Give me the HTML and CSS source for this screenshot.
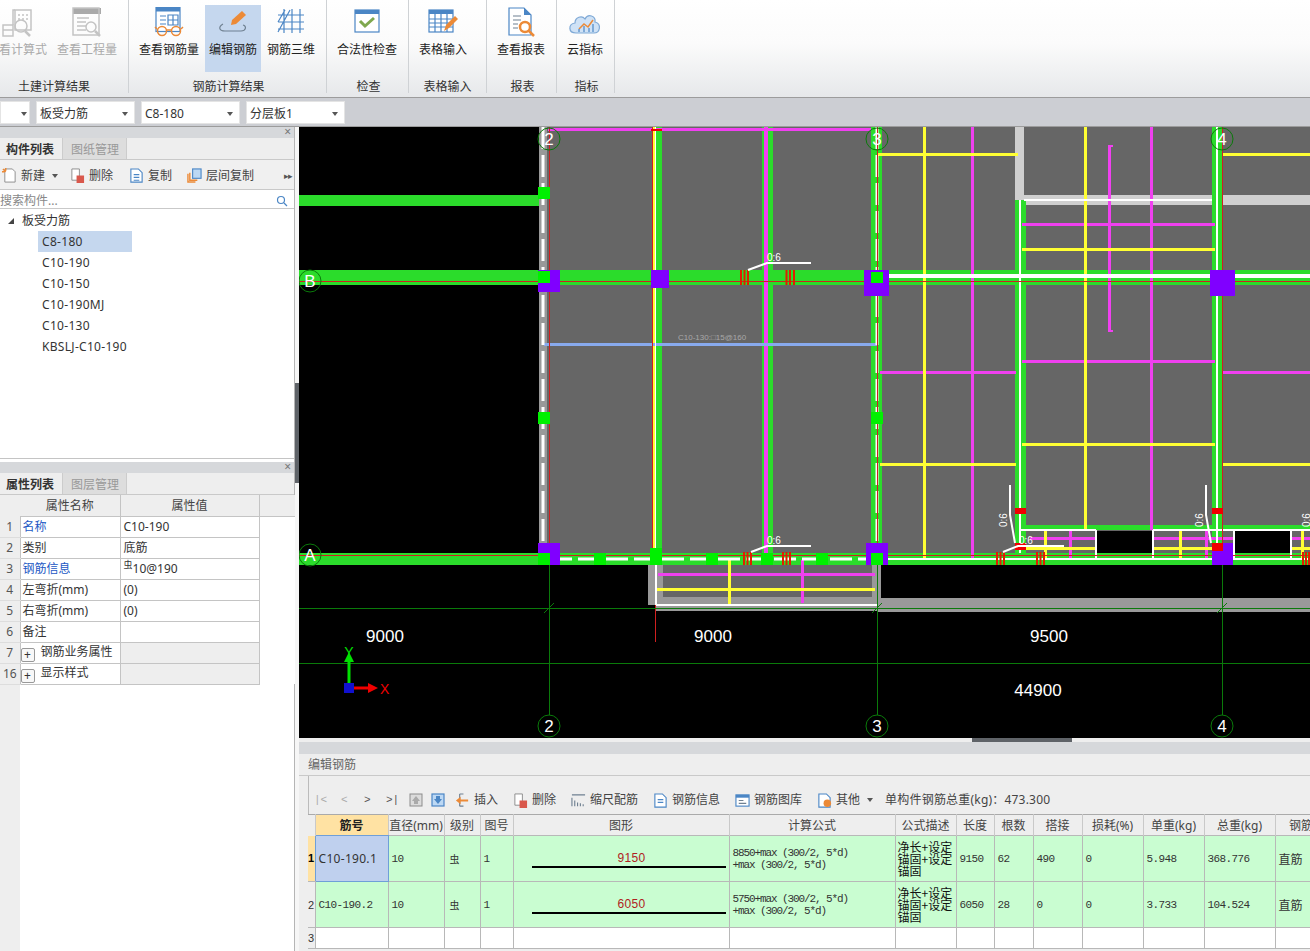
FILE: index.html
```html
<!DOCTYPE html>
<html lang="zh-CN">
<head>
<meta charset="utf-8">
<title>编辑钢筋</title>
<link rel="stylesheet" href="styles.css">
</head>
<body>
<div class="app">
  <header class="ribbon">
    <section class="group g1">
      <div class="btns">
        <div class="btn off"><svg class="ico" viewBox="0 0 32 30"><g class="s-grey"><rect x="14" y="3" width="16" height="20"/><rect x="2" y="18" width="10" height="11"/><path d="M12 18V3h2M12 23h-10"/><circle cx="20" cy="19" r="6"/><path d="M24 24l5 5" class="thick"/><path d="M17 8h2M21 8h2M25 8h2M17 12h2M21 12h2M25 12h2" /></g></svg><span>查看计算式</span></div>
        <div class="btn off"><svg class="ico" viewBox="0 0 32 30"><rect x="2" y="1" width="28" height="6" class="f-grey"/><g class="s-grey"><rect x="2" y="1" width="26" height="27"/><path d="M6 11h12M6 15h9M6 19h9M6 23h9"/><circle cx="20" cy="20" r="5"/><path d="M24 24l5 5" class="thick"/></g></svg><span>查看工程量</span></div>
      </div>
      <div class="label">土建计算结果</div>
    </section>
    <section class="group g2">
      <div class="btns">
        <div class="btn"><svg class="ico" viewBox="0 0 32 30"><rect x="3" y="0.5" width="24" height="24" class="f-white s-blue"/><rect x="3" y="0.5" width="24" height="4" class="f-blue"/><path d="M7 9h6M7 13h6M7 17h6M20 8v10M15 13h10M15 8h10v10H15z" class="s-blue"/><g class="s-orange thick"><circle cx="9" cy="24" r="4.5"/><circle cx="23" cy="24" r="4.5"/><path d="M13.500 23h5M4 22L2 20M28 22l2-2"/></g></svg><span>查看钢筋量</span></div>
        <div class="btn active"><svg class="ico" viewBox="0 0 32 30"><path d="M6 17c-5 3-4 7 2 7h16c5 0 6-5 2-6" class="s-slate"/><path d="M14 18l1-5 10-9 4 4-10 9z" class="f-orange"/></svg><span>编辑钢筋</span></div>
        <div class="btn"><svg class="ico" viewBox="0 0 32 30"><path d="M9 2v24M17 2v24M25 2v24M3 8h26M3 15h26M3 22h26M3 25L15 3M3 15l7-12" class="s-blue"/></svg><span>钢筋三维</span></div>
      </div>
      <div class="label">钢筋计算结果</div>
    </section>
    <section class="group g3">
      <div class="btns">
        <div class="btn"><svg class="ico" viewBox="0 0 32 30"><rect x="4" y="3" width="24" height="22" class="f-white s-blue"/><rect x="4" y="3" width="24" height="4" class="f-blue"/><path d="M9 14l5 5 9-8" class="s-check"/></svg><span>合法性检查</span></div>
      </div>
      <div class="label">检查</div>
    </section>
    <section class="group g4">
      <div class="btns">
        <div class="btn"><svg class="ico" viewBox="0 0 32 30"><rect x="2" y="3" width="24" height="22" class="f-white s-blue"/><rect x="2" y="3" width="24" height="4" class="f-blue"/><path d="M2 12h24M2 16h24M2 20h24M8 7v18M14 7v18M20 7v18" class="s-blue"/><path d="M17 24l2-6 9-9 3 3-9 9z" class="f-orange"/></svg><span>表格输入</span></div>
      </div>
      <div class="label">表格输入</div>
    </section>
    <section class="group g5">
      <div class="btns">
        <div class="btn"><svg class="ico" viewBox="0 0 32 30"><path d="M4 1h15l7 7v20H4z" class="f-white s-blue"/><path d="M19 1l7 7h-7z" class="f-blue"/><path d="M8 9h8M8 13h8M8 17h5M8 21h5" class="s-slate"/><circle cx="20" cy="20" r="5" class="s-orange thick"/><path d="M24 24l5 5" class="s-orange thick"/></svg><span>查看报表</span></div>
      </div>
      <div class="label">报表</div>
    </section>
    <section class="group g6">
      <div class="btns">
        <div class="btn"><svg class="ico" viewBox="0 0 32 30"><path d="M7 26c-8 0-8-9-1-10 0-6 7-8 10-4 3-6 11-3 10 3 7 2 5 11-1 11z" class="f-cloud s-cloud"/><path d="M10 22l5-5 4 3 5-7" class="s-orange"/><path d="M10 25v-3M15 25v-6M20 25v-4M24 25v-8" class="s-blue"/></svg><span>云指标</span></div>
      </div>
      <div class="label">指标</div>
    </section>
  </header>

  <div class="combobar">
    <div class="combo first"></div>
    <div class="combo">板受力筋</div>
    <div class="combo">C8-180</div>
    <div class="combo">分层板1</div>
  </div>

  <div class="main">
    <aside class="left">
      <section class="panel top">
        <div class="panel-head">×</div>
        <div class="tabs"><span class="tab on">构件列表</span><span class="tab">图纸管理</span></div>
        <div class="tools">
          <svg class="mini" viewBox="0 0 16 16"><path d="M3 1h8l3 3v11H3z" class="f-white s-grey2"/><path d="M1 1l3 3M4 0v3M0 4h3" class="s-orange"/></svg>
          <span class="tool">新建</span><i class="caret"></i>
          <svg class="mini m-del" viewBox="0 0 16 16"><path d="M2 1h8v12H2z" class="f-white s-grey2"/><rect x="7" y="8" width="8" height="8" class="f-red"/></svg>
          <span class="tool">删除</span>
          <svg class="mini m-copy" viewBox="0 0 16 16"><path d="M2 1h8l4 4v10H2z" class="f-white s-blue"/><path d="M5 7h6M5 10h6M5 13h6" class="s-blue"/></svg>
          <span class="tool">复制</span>
          <svg class="mini m-layer" viewBox="0 0 16 16"><path d="M1 6v9h8" class="s-orange"/><path d="M3 5v8h8" class="s-orange"/><rect x="6" y="1" width="9" height="10" class="f-sky s-blue"/></svg>
          <span class="tool">层间复制</span>
          <span class="more">▸▸</span>
        </div>
        <div class="search"><span>搜索构件...</span><svg class="glass" viewBox="0 0 12 12"><circle cx="5" cy="5" r="3.500" class="s-blue"/><path d="M8 8l3 3" class="s-blue"/></svg></div>
        <div class="tree">
          <div class="root"><i class="tri"></i>板受力筋</div>
          <div class="leaf sel">C8-180</div>
          <div class="leaf">C10-190</div>
          <div class="leaf">C10-150</div>
          <div class="leaf">C10-190MJ</div>
          <div class="leaf">C10-130</div>
          <div class="leaf">KBSLJ-C10-190</div>
        </div>
      </section>
      <section class="panel bottom">
        <div class="panel-head">×</div>
        <div class="tabs"><span class="tab on">属性列表</span><span class="tab">图层管理</span></div>
        <table class="props">
          <colgroup><col class="pc0"><col class="pc1"><col class="pc2"><col class="pc3"></colgroup>
          <thead><tr><th class="idx"></th><th>属性名称</th><th>属性值</th><th class="pad"></th></tr></thead>
          <tbody>
            <tr><td class="idx">1</td><td class="link">名称</td><td>C10-190</td><td class="blank"></td></tr>
            <tr><td class="idx">2</td><td>类别</td><td>底筋</td><td class="blank"></td></tr>
            <tr><td class="idx">3</td><td class="link">钢筋信息</td><td><sup class="grade">虫</sup>10@190</td><td class="blank"></td></tr>
            <tr><td class="idx">4</td><td>左弯折(mm)</td><td>(0)</td><td class="blank"></td></tr>
            <tr><td class="idx">5</td><td>右弯折(mm)</td><td>(0)</td><td class="blank"></td></tr>
            <tr><td class="idx">6</td><td>备注</td><td></td><td class="blank"></td></tr>
            <tr><td class="idx">7</td><td><span class="plus">+</span>钢筋业务属性</td><td class="shade"></td><td class="blank"></td></tr>
            <tr><td class="idx">16</td><td><span class="plus">+</span>显示样式</td><td class="shade"></td><td class="blank"></td></tr>
          </tbody>
        </table>
        <div class="strip"></div>
      </section>
    </aside>

    <div class="gutter"><div class="grip"></div></div>

    <div class="right">
      <svg class="cad" width="1011" height="611" viewBox="299 127 1011 611">
        <rect x="299" y="127" width="1011" height="611" class="f-black"/>
        <rect x="547" y="127" width="763" height="428" class="f-slab"/>
        <rect x="539" y="127" width="8" height="428" class="f-wall"/>
        <!-- balcony and lower band -->
        <rect x="648" y="565" width="233" height="40" class="f-wall"/>
        <rect x="663" y="565" width="209" height="32" class="f-slab"/>
        <rect x="655" y="604" width="655" height="7" class="f-wall"/>
        <rect x="878" y="598" width="432" height="14" class="f-wall"/>
        <!-- notches -->
        <g class="f-black">
          <rect x="1096" y="531" width="57" height="22"/>
          <rect x="1235" y="531" width="56" height="22"/>
        </g>
        <!-- pale walls -->
        <g class="f-pale">
          <rect x="1015" y="127" width="9" height="73"/>
          <rect x="1015" y="195" width="197" height="10"/>
          <rect x="1223" y="195" width="87" height="10"/>
        </g>
        <!-- green beams -->
        <g class="f-green">
          <rect x="299" y="195" width="240" height="11"/>
          <rect x="299" y="270" width="1011" height="15"/>
          <rect x="299" y="553" width="1011" height="12"/>
          <rect x="652" y="127" width="10" height="426"/>
          <rect x="762" y="127" width="11" height="426"/>
          <rect x="871" y="127" width="11" height="426"/>
          <rect x="1015" y="200" width="11" height="353"/>
          <rect x="1212" y="127" width="11" height="426"/>
          <rect x="1026" y="525" width="284" height="5"/>
        </g>
        <!-- magenta bars -->
        <g class="f-mag">
          <rect x="548" y="128" width="323" height="3"/>
          <rect x="764" y="127" width="4" height="426"/>
          <rect x="971" y="127" width="3" height="431"/>
          <rect x="1150" y="127" width="3" height="403"/>
          <rect x="1108" y="145" width="3" height="186"/>
          <rect x="1108" y="145" width="5" height="2"/>
          <rect x="1108" y="330" width="5" height="2"/>
          <rect x="1022" y="223" width="193" height="3"/>
          <rect x="1022" y="360" width="193" height="3"/>
          <rect x="880" y="371" width="136" height="3"/>
          <rect x="1223" y="371" width="87" height="3"/>
          <rect x="658" y="573" width="217" height="3"/>
          <rect x="801" y="560" width="3" height="43"/>
          <rect x="1030" y="537" width="66" height="3"/>
          <rect x="1069" y="531" width="3" height="27"/>
          <rect x="1153" y="537" width="81" height="3"/>
          <rect x="1205" y="531" width="3" height="27"/>
          <rect x="1291" y="537" width="19" height="3"/>
        </g>
        <!-- yellow bars -->
        <g class="f-yel">
          <rect x="878" y="153" width="140" height="3"/>
          <rect x="1222" y="153" width="88" height="3"/>
          <rect x="923" y="127" width="3" height="431"/>
          <rect x="1084" y="127" width="3" height="403"/>
          <rect x="1022" y="248" width="193" height="3"/>
          <rect x="1022" y="443" width="193" height="3"/>
          <rect x="880" y="463" width="136" height="3"/>
          <rect x="1223" y="463" width="87" height="3"/>
          <rect x="653" y="127" width="2" height="426"/>
          <rect x="657" y="588" width="218" height="3"/>
          <rect x="728" y="560" width="3" height="45"/>
          <rect x="1026" y="547" width="70" height="3"/>
          <rect x="1044" y="530" width="3" height="28"/>
          <rect x="1153" y="547" width="81" height="3"/>
          <rect x="1179" y="530" width="3" height="28"/>
          <rect x="1291" y="547" width="19" height="3"/>
          <rect x="1301" y="530" width="3" height="28"/>
        </g>
        <rect x="544" y="343" width="333" height="3" class="f-steel"/>
        <text x="678" y="340" class="t-tiny">C10-130:□15@160</text>
        <!-- white lines -->
        <g class="f-white">
          <rect x="655" y="127" width="1" height="426"/>
          <rect x="885" y="274" width="425" height="4"/>
          <rect x="1019" y="200" width="2" height="353"/>
          <rect x="1216" y="127" width="2" height="426"/>
          <rect x="1024" y="199" width="188" height="2"/>
          <rect x="655" y="604" width="222" height="2"/>
          <rect x="655" y="565" width="2" height="40"/>
          <rect x="880" y="558" width="430" height="2"/>
          <rect x="1021" y="529" width="75" height="2"/>
          <rect x="1153" y="529" width="157" height="2"/>
          <rect x="1095" y="530" width="2" height="29"/>
          <rect x="1152" y="530" width="2" height="29"/>
          <rect x="1233" y="530" width="2" height="29"/>
          <rect x="1290" y="530" width="2" height="29"/>
        </g>
        <path d="M543 127V553" class="s-dash"/>
        <path d="M877 127V553" class="s-dash"/>
        <path d="M550 559H871" class="s-dash"/>
        <!-- red lines -->
        <g class="s-red">
          <path d="M549.500 127V553M652.500 127V553M877.500 127V553M1222.500 127V565M299 281.500H1310M299 555.500H1310M655.500 605V642"/>
        </g>
        <rect x="651" y="129" width="11" height="2" class="f-red"/>
        <!-- purple columns -->
        <g class="f-purple">
          <rect x="538" y="270" width="22" height="22"/>
          <rect x="651" y="270" width="18" height="18"/>
          <rect x="864" y="270" width="25" height="26"/>
          <rect x="1210" y="270" width="25" height="26"/>
          <rect x="538" y="543" width="22" height="22"/>
          <rect x="866" y="543" width="22" height="22"/>
          <rect x="1212" y="543" width="21" height="22"/>
        </g>
        <!-- bright nodes -->
        <g class="f-node">
          <rect x="538" y="187" width="12" height="12"/>
          <rect x="538" y="271" width="12" height="12"/>
          <rect x="871" y="272" width="12" height="11"/>
          <rect x="538" y="412" width="12" height="12"/>
          <rect x="871" y="412" width="12" height="12"/>
          <rect x="538" y="553" width="12" height="12"/>
          <rect x="594" y="553" width="12" height="12"/>
          <rect x="650" y="548" width="12" height="17"/>
          <rect x="706" y="553" width="12" height="12"/>
          <rect x="761" y="553" width="12" height="12"/>
          <rect x="816" y="553" width="12" height="12"/>
          <rect x="871" y="553" width="12" height="12"/>
        </g>
        <!-- red ticks -->
        <g class="s-tick">
          <path d="M741 270V285M744.500 270V285M748 270V285M786.500 270V285M790 270V285M794 270V285"/>
          <path d="M744 552V565M747.500 552V565M751 552V565M783 552V565M786.500 552V565M790 552V565"/>
          <path d="M997 552V565M1000.500 552V565M1004 552V565M1037 552V565M1040.500 552V565M1044 552V565"/>
          <path d="M1303 552V565M1306 552V565M1309 552V565"/>
        </g>
        <g class="f-red">
          <rect x="1015" y="508" width="11" height="6"/>
          <rect x="1212" y="508" width="11" height="6"/>
          <rect x="1015" y="543" width="11" height="7"/>
          <rect x="1212" y="543" width="11" height="8"/>
        </g>
        <!-- leaders -->
        <g class="s-white">
          <path d="M748 270l19-7h44"/>
          <path d="M751 552l16-6h44"/>
          <path d="M1003 552l15-6h46"/>
          <path d="M1010 485v30l5 28"/>
          <path d="M1206 485v30l5 28"/>
        </g>
        <g class="t-small">
          <text x="767" y="261">0:6</text>
          <text x="767" y="544">0:6</text>
          <text x="1019" y="544">0:6</text>
          <text transform="translate(1007 527) rotate(-90)">0:6</text>
          <text transform="translate(1203 527) rotate(-90)">0:6</text>
          <text transform="translate(1310 527) rotate(-90)">0:6</text>
        </g>
        <!-- axes -->
        <g class="s-axis">
          <path d="M549.500 565V715M877.500 565V715M1222.500 565V715M299 608.500H1310M299 663.500H1310"/>
          <path d="M544 613l10-10M872 613l10-10M1217 613l10-10"/>
          <circle cx="549" cy="139" r="11"/>
          <circle cx="877" cy="139" r="11"/>
          <circle cx="1222" cy="139" r="11"/>
          <circle cx="549" cy="726" r="11"/>
          <circle cx="877" cy="726" r="11"/>
          <circle cx="1222" cy="726" r="11"/>
          <circle cx="310" cy="281" r="11"/>
          <circle cx="310" cy="555" r="11"/>
        </g>
        <g class="t-axis">
          <text x="549" y="145">2</text>
          <text x="877" y="145">3</text>
          <text x="1222" y="145">4</text>
          <text x="549" y="732">2</text>
          <text x="877" y="732">3</text>
          <text x="1222" y="732">4</text>
          <text x="310" y="287">B</text>
          <text x="310" y="561">A</text>
        </g>
        <g class="t-dim">
          <text x="385" y="642">9000</text>
          <text x="713" y="642">9000</text>
          <text x="1049" y="642">9500</text>
          <text x="1038" y="696">44900</text>
        </g>
        <!-- UCS -->
        <rect x="347.500" y="660" width="3" height="26" class="f-ucsg"/>
        <path d="M349 652l-5 10h10z" class="f-ucsg"/>
        <rect x="350" y="686.500" width="20" height="3" class="f-ucsr"/>
        <path d="M378 688l-10-5v10z" class="f-ucsr"/>
        <rect x="344" y="683" width="10" height="10" class="f-ucsb"/>
        <text x="349" y="657" class="t-y">Y</text>
        <text x="380" y="694" class="t-x">X</text>
      </svg>

      <div class="split"><div class="split-grip"></div></div>

      <section class="editor">
        <div class="editor-head"></div>
        <div class="editor-title">编辑钢筋</div>
        <div class="editor-tools">
          <span class="nav nav-first">|&lt;</span><span class="nav">&lt;</span><span class="nav dark nav-mid">&gt;</span><span class="nav dark">&gt;|</span>
          <svg class="mini up" viewBox="0 0 14 14"><rect x="1" y="1" width="12" height="12" class="f-light s-grey2"/><path d="M7 3l4 5H9v3H5V8H3z" class="f-grey"/></svg>
          <svg class="mini down" viewBox="0 0 14 14"><rect x="1" y="1" width="12" height="12" class="f-sky s-blue"/><path d="M7 11l4-5H9V3H5v3H3z" class="f-blue"/></svg>
          <svg class="mini b-ins" viewBox="0 0 16 16"><path d="M5 1h4M5 14h4M5 1v13" class="s-slate"/><path d="M1 8l5-4v3h8v2H6v3z" class="f-orange"/></svg>
          <span class="tool">插入</span>
          <svg class="mini b-next" viewBox="0 0 16 16"><path d="M2 1h8v12H2z" class="f-white s-grey2"/><rect x="7" y="8" width="8" height="8" class="f-red"/></svg>
          <span class="tool">删除</span>
          <svg class="mini b-next" viewBox="0 0 16 16"><path d="M1 14V5M4 14V8M7 14V10M10 14V11M13 14V12M1 2h14" class="s-slate"/></svg>
          <span class="tool">缩尺配筋</span>
          <svg class="mini b-next" viewBox="0 0 16 16"><path d="M2 1h8l4 4v10H2z" class="f-white s-blue"/><path d="M5 7h6M5 10h6" class="s-blue"/></svg>
          <span class="tool">钢筋信息</span>
          <svg class="mini b-next" viewBox="0 0 16 16"><rect x="1" y="2" width="14" height="12" class="f-white s-blue"/><rect x="1" y="2" width="14" height="3" class="f-blue"/><path d="M4 8h5M4 11h8" class="s-slate"/></svg>
          <span class="tool">钢筋图库</span>
          <svg class="mini b-next" viewBox="0 0 16 16"><path d="M2 1h8l4 4v10H2z" class="f-white s-blue"/><circle cx="11" cy="11" r="4" class="f-orange"/></svg>
          <span class="tool">其他</span><i class="caret"></i>
          <span class="total">单构件钢筋总重(kg)：473.300</span>
        </div>
        <div class="grid-wrap">
          <table class="rebar">
            <colgroup>
              <col class="c0"><col class="c1"><col class="c2"><col class="c3"><col class="c4"><col class="c5"><col class="c6"><col class="c7"><col class="c8"><col class="c9"><col class="c10"><col class="c11"><col class="c12"><col class="c13"><col class="c14">
            </colgroup>
            <thead>
              <tr><th class="rh"></th><th class="cur">筋号</th><th>直径(mm)</th><th>级别</th><th>图号</th><th>图形</th><th>计算公式</th><th>公式描述</th><th>长度</th><th>根数</th><th>搭接</th><th>损耗(%)</th><th>单重(kg)</th><th>总重(kg)</th><th>钢筋类型</th></tr>
            </thead>
            <tbody>
              <tr class="data">
                <td class="rh curh">1</td><td class="name sel-cell">C10-190.1</td><td>10</td><td class="gr">虫</td><td>1</td>
                <td class="shape"><div class="bar">9150</div></td>
                <td class="formula">8850+max (300/2, 5*d)<br>+max (300/2, 5*d)</td>
                <td class="desc">净长+设定锚固+设定锚固</td>
                <td>9150</td><td>62</td><td>490</td><td>0</td><td>5.948</td><td>368.776</td><td class="kind">直筋</td>
              </tr>
              <tr class="data">
                <td class="rh">2</td><td>C10-190.2</td><td>10</td><td class="gr">虫</td><td>1</td>
                <td class="shape"><div class="bar">6050</div></td>
                <td class="formula">5750+max (300/2, 5*d)<br>+max (300/2, 5*d)</td>
                <td class="desc">净长+设定锚固+设定锚固</td>
                <td>6050</td><td>28</td><td>0</td><td>0</td><td>3.733</td><td>104.524</td><td class="kind">直筋</td>
              </tr>
              <tr class="empty"><td class="rh">3</td><td></td><td></td><td></td><td></td><td></td><td></td><td></td><td></td><td></td><td></td><td></td><td></td><td></td><td></td></tr>
            </tbody>
          </table>
        </div>
      </section>
    </div>
  </div>
</div>
</body>
</html>
```
FILE: styles.css
```css
* { box-sizing: border-box; }
html, body { margin: 0; padding: 0; }
body { width: 1310px; height: 951px; overflow: hidden; background: #eeeeee; color: #333;
  font: 12px/14px "Noto Sans", "Noto Sans CJK SC", sans-serif; }
.app { width: 1310px; height: 951px; display: flex; flex-direction: column; overflow: hidden; }

/* ribbon */
.ribbon { height: 98px; flex: none; display: flex; border-bottom: 1px solid #9c9c9c;
  background: linear-gradient(#ffffff 0, #fbfbfb 45%, #e6e8ea 100%); }
.group { flex: none; display: flex; flex-direction: column; border-right: 1px solid #cfd2d5; height: 93px; }
.g1 { width: 147px; margin-left: -18px; padding-right: 2px; }
.g2 { width: 198px; padding-left: 5px; }
.g3 { width: 82px; padding-left: 5px; }
.g4 { width: 78px; padding-left: 5px; }
.g5 { width: 70px; padding-left: 5px; }
.g6 { width: 58px; padding-left: 5px; }
.btns { display: flex; gap: 1px; height: 67px; margin-top: 5px; flex: none; }
.g1 .btns { gap: 0; }
.btn { display: flex; flex-direction: column; align-items: center; padding: 2px 5px 0; white-space: nowrap; color: #222; }
.btn.off { color: #aaa; }
.btn.active { background: #c5d7ee; padding: 2px 4px 0; }
.ico { width: 32px; height: 30px; flex: none; margin-bottom: 6px; }
.label { text-align: center; padding-top: 8px; line-height: 14px; color: #333; margin-left: -3px; }
.g1 .label { margin-left: 0; }
.g4 .label { margin-left: -5px; }

/* combo bar */
.combobar { height: 29px; flex: none; background: #ccced3; display: flex; gap: 6px; padding-top: 3px; border-bottom: 1px solid #9c9c9c; }
.combo { width: 99px; height: 23px; background: #fff; border: 1px solid #e4e4e4; padding: 2px 6px 0 3px; line-height: 19px;
  display: flex; align-items: center; color: #333; }
.combo::after { content: ""; margin-left: auto; border: 3px solid transparent; border-top: 4px solid #555; border-bottom: 0; }
.combo.first { width: 30px; padding-right: 2px; }

/* main */
.main { flex: 1; display: flex; min-height: 0; }
.left { width: 295px; flex: none; display: flex; flex-direction: column; background: #fff; border-right: 1px solid #b5b5b5; }
.panel { display: flex; flex-direction: column; }
.panel.top { height: 332px; border-bottom: 1px solid #c4c4c4; margin-bottom: 3px; flex: none; }
.panel.bottom { flex: 1; min-height: 0; }
.panel-head { height: 11px; flex: none; background: #d6d8db; text-align: right; padding-right: 3px; line-height: 10px; color: #777; font-size: 12px; }
.tabs { height: 22px; flex: none; display: flex; background: #eeeeee; border-bottom: 1px solid #c9c9c9; }
.tab { width: 64px; padding-left: 8px; line-height: 23px; color: #999; background: #dddddd; border-right: 1px solid #cccccc; }
.tab.on { width: 63px; padding-left: 6px; color: #333; font-weight: 700; background: #eeeeee; }
.tools { height: 30px; flex: none; display: flex; align-items: center; background: #f0f0f0; border-bottom: 1px solid #c9c9c9; padding: 2px 0 0 2px; color: #444; }
.mini { width: 15px; height: 15px; flex: none; }
.tool { margin-left: 4px; white-space: nowrap; color: #444; }
.caret { width: 0; height: 0; margin-left: 7px; border: 3px solid transparent; border-top: 4px solid #555; border-bottom: 0; flex: none; }
.m-del { margin-left: 12px; }
.m-copy { margin-left: 16px; }
.m-layer { margin-left: 15px; }
.more { margin-left: auto; margin-right: 2px; font-size: 9px; color: #555; letter-spacing: -1px; }
.search { height: 19px; flex: none; display: flex; align-items: center; justify-content: space-between; padding: 3px 6px 0 0; border-bottom: 1px solid #c9c9c9; color: #888; }
.glass { width: 12px; height: 12px; }
.tree { color: #333; padding-top: 1px; }
.root { height: 21px; line-height: 21px; padding-left: 8px; display: flex; align-items: center; }
.tri { width: 0; height: 0; margin-right: 8px; border-right: 6px solid #444; border-top: 6px solid transparent; }
.leaf { width: 94px; height: 21px; line-height: 21px; margin-left: 38px; padding-left: 4px; white-space: nowrap; letter-spacing: 0.3px; }
.leaf.sel { background: #c5d7ee; }

/* property table */
.props { width: 295px; table-layout: fixed; border-collapse: collapse; flex: none; }
.pc0 { width: 20px; } .pc1 { width: 100px; } .pc2 { width: 139px; } .pc3 { width: 36px; }
.props th { height: 21px; padding: 2px 0 0; font-weight: 400; color: #444; background: #eeeeee; border: 1px solid #c4c4c4; border-width: 0 1px 1px 0; }
.props td { height: 21px; padding: 1px 3px 0; border: 1px solid #c4c4c4; white-space: nowrap; overflow: hidden; color: #333; }
.props td:nth-child(2) { padding-left: 2px; }
.props .idx { background: #eeeeee; text-align: center; padding: 1px 0 0; color: #555; border-width: 0 0 1px 0; border-color: #dddddd; }
.props th.idx { border: 0; }
.props th.pad { border-right: 0; }
.props td.blank { border: 0; background: #fff; }
.props td.link { color: #2358c4; }
.props td.shade { background: #eeeeee; }
.grade { font-size: 9px; line-height: 0; }
.plus { display: inline-block; width: 14px; height: 14px; margin: 0 6px 0 -2px; border: 1px solid #999; border-radius: 2px; background: #f8f8f8; text-align: center; line-height: 11px; color: #333; vertical-align: -3px; }
.strip { flex: 1; width: 20px; background: #eeeeee; }

/* gutter */
.gutter { width: 4px; flex: none; background: #f6f6f6; }
.grip { width: 4px; height: 100px; margin-top: 256px; background: #5f6368; }

/* right column */
.right { flex: 1; min-width: 0; display: flex; flex-direction: column; }
.cad { display: block; flex: none; }
.split { height: 4px; flex: none; background: #eeeeee; }
.split-grip { width: 100px; height: 4px; margin-left: 673px; background: #5f6368; }
.editor { flex: 1; display: flex; flex-direction: column; min-height: 0; background: #eeeeee; }
.editor-head { height: 12px; flex: none; background: #d6d8db; }
.editor-title { height: 22px; flex: none; padding-left: 9px; line-height: 22px; color: #666; border-bottom: 1px solid #c9c9c9; }
.editor-tools { height: 38px; flex: none; margin-left: 9px; padding: 10px 0 0 5px; display: flex; align-items: center; border-left: 1px solid #bbbbbb; }
.nav { width: 23px; color: #aaa; font-family: "Liberation Mono", monospace; font-size: 11px; white-space: nowrap; }
.nav-first { width: 27px; }
.nav-mid { width: 22px; }
.nav.dark { color: #555; }
.up { width: 14px; height: 14px; }
.down { margin-left: 8px; width: 14px; height: 14px; }
.b-ins { margin-left: 10px; }
.b-next { margin-left: 15px; }
.total { margin-left: 12px; white-space: nowrap; color: #444; letter-spacing: 0.2px; }

/* rebar table */
.grid-wrap { margin-left: 9px; overflow: hidden; height: 135px; flex: none; }
.rebar { width: 1043px; table-layout: fixed; border-collapse: collapse; border-top: 1px solid #aaaaaa; }
.c0 { width: 7px; } .c1 { width: 73px; } .c2 { width: 56px; } .c3 { width: 36px; } .c4 { width: 33px; }
.c5 { width: 216px; } .c6 { width: 166px; } .c7 { width: 61px; } .c8 { width: 38px; } .c9 { width: 39px; }
.c10 { width: 49px; } .c11 { width: 61px; } .c12 { width: 61px; } .c13 { width: 71px; } .c14 { width: 76px; }
.rebar th { height: 21px; padding: 2px 0 0; font-weight: 400; color: #444; background: #eeeeee; border-right: 1px solid #c9c9c9; white-space: nowrap; overflow: hidden; }
.rebar th.cur { background: #ffe2a3; font-weight: 700; color: #222; border-bottom: 1px solid #6f9fd8; }
.rebar td { padding: 0 3px; border: 1px solid #b8b8b8; white-space: nowrap; overflow: hidden; color: #333;
  font: 11px/12px "Liberation Mono", monospace; letter-spacing: -0.6px; }
.rebar .data td { height: 46px; background: #c9fdd1; }
.rebar .empty td { height: 21px; background: #ffffff; }
.rebar td.rh, .rebar .data td.rh, .rebar .empty td.rh { padding: 0; background: #eeeeee; font: 11px/12px "Liberation Sans", sans-serif; letter-spacing: 0; border-width: 0 0 1px 0; }
.rebar .data td.curh { background: #ffe2a3; font-weight: 700; color: #000; }
.rebar .data td.sel-cell { background: #bfd0ee; border: 1px solid #6f9fd8; font: 12px/14px "Noto Sans", sans-serif; letter-spacing: 0.3px; }
.rebar .data td.gr { font: 10px/12px "Noto Sans CJK SC", sans-serif; letter-spacing: 0; padding-left: 5px; }
.rebar .data td.shape { padding: 0 3px 0 18px; }
.bar { padding-left: 6px; text-align: center; font: 12px/16px "Liberation Sans", sans-serif; letter-spacing: 0.3px; color: #b02222; border-bottom: 2px solid #000; }
.rebar .data td.formula { letter-spacing: -1.1px; line-height: 12px; }
.rebar .data td.desc { white-space: normal; font: 12px/12px "Noto Sans CJK SC", sans-serif; letter-spacing: 0; color: #111; word-break: break-all; padding: 0 2px; }
.rebar .data td.kind { font: 12px/14px "Noto Sans CJK SC", sans-serif; letter-spacing: 0; }

/* svg paints */
.ico path, .ico rect, .ico circle, .mini path, .mini rect, .mini circle, .glass path, .glass circle { fill: none; }
.s-grey, .s-grey * { stroke: #c4c4c4; stroke-width: 1.500; fill: none; }
.s-grey2 { stroke: #8c8c8c; stroke-width: 1; }
.ico .s-blue, .mini .s-blue, .glass .s-blue { stroke: #4b86c5; stroke-width: 1.200; }
.ico .s-slate, .mini .s-slate { stroke: #6f8091; stroke-width: 1.200; }
.ico .s-orange, .mini .s-orange, .ico .s-orange * { stroke: #ec8a37; stroke-width: 1.500; fill: none; }
.ico .thick, .thick { stroke-width: 2.500; }
.ico .s-check { stroke: #7fa84f; stroke-width: 3; }
.ico .f-white, .mini .f-white { fill: #ffffff; }
.ico .f-blue, .mini .f-blue { fill: #4b86c5; }
.ico .f-orange, .mini .f-orange { fill: #ec8a37; }
.ico .f-grey, .mini .f-grey { fill: #aaaaaa; }
.ico .f-cloud { fill: #cfe2f6; }
.ico .s-cloud { stroke: #7fa9d6; stroke-width: 1.200; }
.mini .f-red { fill: #d9584c; }
.mini .f-sky { fill: #bcd8f4; }
.mini .f-light { fill: #dcdcdc; }

.cad .f-black { fill: #000000; }
.cad .f-slab { fill: #666666; }
.cad .f-wall { fill: #999999; }
.cad .f-pale { fill: #cfcfcf; }
.cad .f-green { fill: #2bdc2b; }
.cad .f-node { fill: #00f000; }
.cad .f-mag { fill: #f040f0; }
.cad .f-yel { fill: #ffff33; }
.cad .f-steel { fill: #88aaee; }
.cad .f-white { fill: #ffffff; }
.cad .f-red { fill: #f00000; }
.cad .f-purple { fill: #8000ff; }
.cad .f-ucsg { fill: #00e000; }
.cad .f-ucsr { fill: #f00000; }
.cad .f-ucsb { fill: #1010d0; }
.cad path, .cad circle { fill: none; }
.cad path.f-ucsg { fill: #00e000; }
.cad path.f-ucsr { fill: #f00000; }
.s-dash { stroke: #ffffff; stroke-width: 3; stroke-dasharray: 22 6; }
.s-red { stroke: #d02020; stroke-width: 1; }
.s-tick { stroke: #e02000; stroke-width: 2; }
.s-white { stroke: #ffffff; stroke-width: 2; }
.s-axis { stroke: #0a7a0a; stroke-width: 1; }
.t-axis text { font: 17px "Liberation Sans", sans-serif; fill: #ffffff; text-anchor: middle; }
.t-dim text { font: 17px "Liberation Sans", sans-serif; fill: #ffffff; text-anchor: middle; }
.t-small text { font: 10px "Liberation Sans", sans-serif; fill: #ffffff; }
.t-tiny { font: 8px "Liberation Sans", sans-serif; fill: #a8a8a8; }
.t-y { font: 14px "Liberation Sans", sans-serif; fill: #00e000; text-anchor: middle; }
.t-x { font: 14px "Liberation Sans", sans-serif; fill: #f00000; }
```
